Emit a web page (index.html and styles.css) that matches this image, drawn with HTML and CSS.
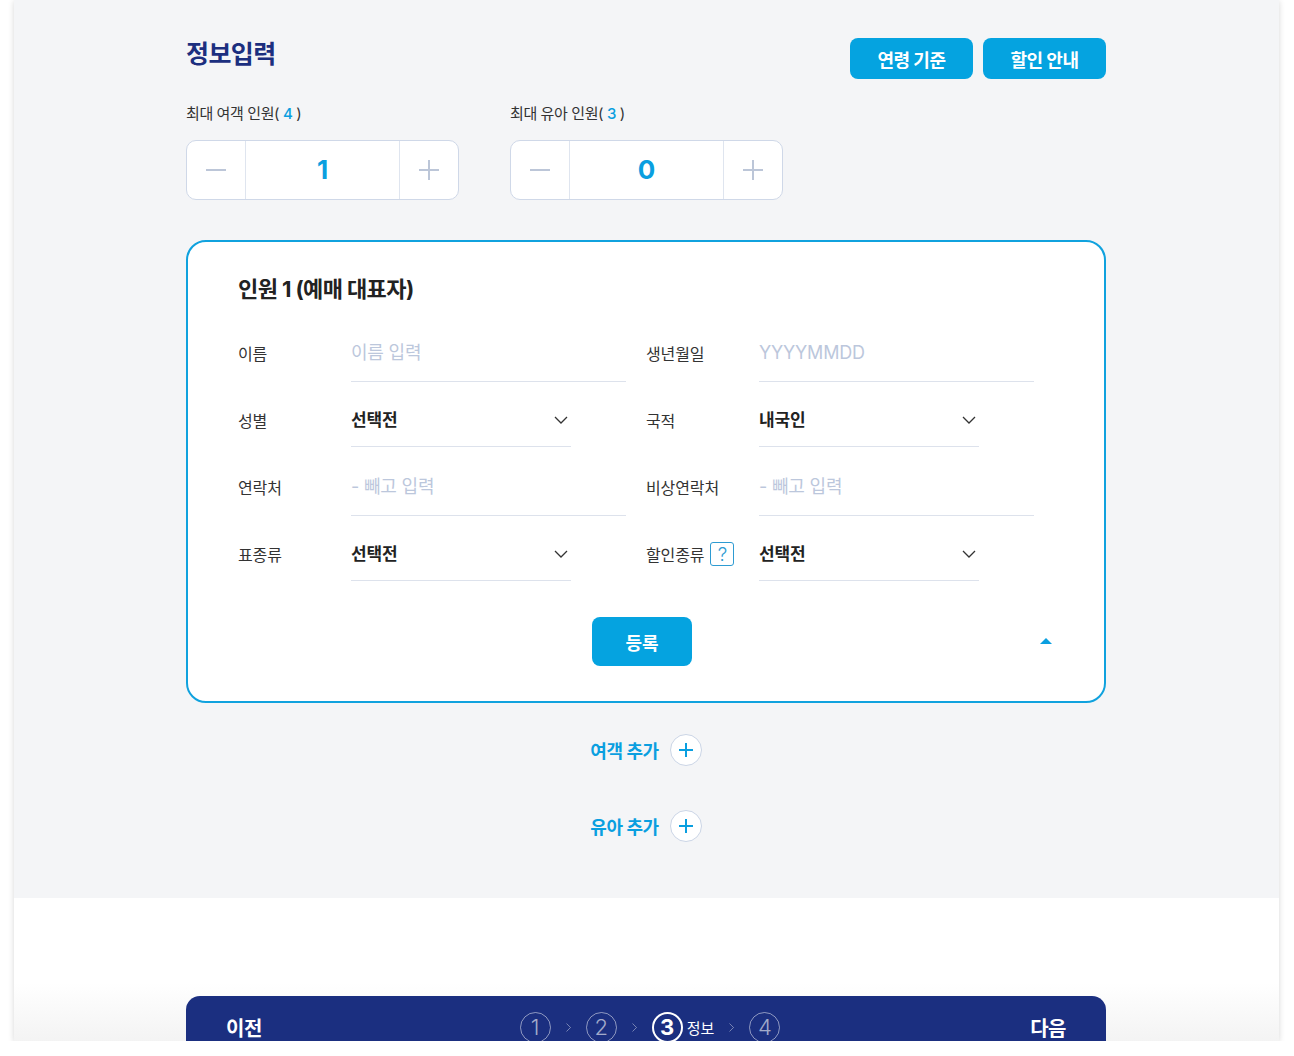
FILE: index.html
```html
<!DOCTYPE html>
<html lang="ko">

<head>
    <meta charset="UTF-8">
    <meta name="viewport" content="width=device-width, initial-scale=1.0">
    <title>정보입력</title>
    <link rel="stylesheet" href="styles.css">
</head>

<body>
    <div class="page">
        <section class="info">
            <div class="info-head">
                <h2 class="info-title">정보입력</h2>
                <div class="head-btns">
                    <button type="button" class="btn-blue">연령 기준</button>
                    <button type="button" class="btn-blue">할인 안내</button>
                </div>
            </div>

            <!-- 인원 선택 -->
            <div class="counters">
                <div class="counter-group">
                    <p class="counter-label">최대 여객 인원( <span class="num">4</span> )</p>
                    <div class="counter">
                        <span class="counter-btn"><i class="minus"></i></span>
                        <span class="counter-value">1</span>
                        <span class="counter-btn"><i class="plus"></i></span>
                    </div>
                </div>
                <div class="counter-group">
                    <p class="counter-label">최대 유아 인원( <span class="num">3</span> )</p>
                    <div class="counter">
                        <span class="counter-btn"><i class="minus"></i></span>
                        <span class="counter-value">0</span>
                        <span class="counter-btn"><i class="plus"></i></span>
                    </div>
                </div>
            </div>

            <!-- 인원 1 -->
            <div class="person-card">
                <h3 class="card-title">인원 1 (예매 대표자)</h3>
                <div class="fields">
                    <div class="field">
                        <label class="field-label" for="name">이름</label>
                        <input class="text-input" type="text" id="name" placeholder="이름 입력">
                    </div>
                    <div class="field">
                        <label class="field-label" for="birth">생년월일</label>
                        <input class="text-input" type="text" id="birth" placeholder="YYYYMMDD">
                    </div>
                    <div class="field">
                        <span class="field-label">성별</span>
                        <div class="select-box">
                            <span>선택전</span>
                            <svg width="14" height="8" viewBox="0 0 14 8"><path d="M1 1l6 6 6-6" fill="none" stroke="#333" stroke-width="1.3"/></svg>
                        </div>
                    </div>
                    <div class="field">
                        <span class="field-label">국적</span>
                        <div class="select-box">
                            <span>내국인</span>
                            <svg width="14" height="8" viewBox="0 0 14 8"><path d="M1 1l6 6 6-6" fill="none" stroke="#333" stroke-width="1.3"/></svg>
                        </div>
                    </div>
                    <div class="field">
                        <label class="field-label" for="phone">연락처</label>
                        <input class="text-input" type="text" id="phone" placeholder="- 빼고 입력">
                    </div>
                    <div class="field">
                        <label class="field-label" for="phone2">비상연락처</label>
                        <input class="text-input" type="text" id="phone2" placeholder="- 빼고 입력">
                    </div>
                    <div class="field">
                        <span class="field-label">표종류</span>
                        <div class="select-box">
                            <span>선택전</span>
                            <svg width="14" height="8" viewBox="0 0 14 8"><path d="M1 1l6 6 6-6" fill="none" stroke="#333" stroke-width="1.3"/></svg>
                        </div>
                    </div>
                    <div class="field">
                        <span class="field-label">할인종류 <span class="help">?</span></span>
                        <div class="select-box">
                            <span>선택전</span>
                            <svg width="14" height="8" viewBox="0 0 14 8"><path d="M1 1l6 6 6-6" fill="none" stroke="#333" stroke-width="1.3"/></svg>
                        </div>
                    </div>
                </div>
                <div class="card-foot">
                    <button type="button" class="btn-submit">등록</button>
                    <span class="fold"></span>
                </div>
            </div>

            <div class="add-list">
                <a class="add-btn">여객 추가 <span class="add-icon"></span></a>
                <a class="add-btn">유아 추가 <span class="add-icon"></span></a>
            </div>
        </section>

        <section class="bottom">
            <nav class="bottom-bar">
                <a class="bar-link">이전</a>
                <div class="steps">
                    <span class="step">1</span>
                    <svg class="step-arrow" width="5" height="9" viewBox="0 0 5 9"><path d="M0.5 0.5l4 4-4 4" fill="none" stroke="currentColor" stroke-width="1"/></svg>
                    <span class="step">2</span>
                    <svg class="step-arrow" width="5" height="9" viewBox="0 0 5 9"><path d="M0.5 0.5l4 4-4 4" fill="none" stroke="currentColor" stroke-width="1"/></svg>
                    <span class="step active">3</span>
                    <span class="step-name">정보</span>
                    <svg class="step-arrow" width="5" height="9" viewBox="0 0 5 9"><path d="M0.5 0.5l4 4-4 4" fill="none" stroke="currentColor" stroke-width="1"/></svg>
                    <span class="step">4</span>
                </div>
                <a class="bar-link">다음</a>
            </nav>
        </section>
    </div>
</body>

</html>
```

FILE: styles.css
```css
body {
    margin: 0;
    background-color: #fff;
    font-family: "Inter", "Noto Sans CJK KR", sans-serif;
    color: #222;
}

.page {
    width: 1265px;
    height: 1041px;
    margin-left: 14px;
    overflow: hidden;
    background-color: #fff;
    box-shadow: 0 1px 6px rgba(0, 0, 0, 0.16);
}

/* 상단 정보 영역 */
.info {
    background-color: #f4f5f7;
    padding: 38px 173px 56px 172px;
}

.info-head {
    display: flex;
    justify-content: space-between;
    align-items: flex-start;
}

.info-title {
    margin: 0;
    font-size: 25px;
    line-height: 32px;
    font-weight: 700;
    letter-spacing: -0.6px;
    color: #1c2f7f;
}

.head-btns {
    display: flex;
    gap: 10px;
}

.btn-blue {
    width: 123px;
    height: 41px;
    border: none;
    border-radius: 8px;
    background-color: #05a3e0;
    color: #fff;
    font-family: inherit;
    font-size: 18px;
    font-weight: 700;
    letter-spacing: -0.5px;
    cursor: pointer;
}

/* 인원 카운터 */
.counters {
    display: flex;
    gap: 51px;
    margin-top: 25px;
}

.counter-label {
    margin: 0 0 16px;
    font-size: 15px;
    line-height: 20px;
    color: #333;
    letter-spacing: -0.4px;
}

.counter-label .num {
    color: #0a9fe0;
    font-weight: 500;
}

.counter {
    display: flex;
    width: 273px;
    height: 60px;
    box-sizing: border-box;
    border: 1px solid #cfd8e8;
    border-radius: 10px;
    background-color: #fff;
}

.counter-btn {
    width: 59px;
    display: flex;
    align-items: center;
    justify-content: center;
}

.counter-value {
    width: 154px;
    display: flex;
    align-items: center;
    justify-content: center;
    padding-bottom: 2px;
    border-left: 1px solid #dfe5ef;
    border-right: 1px solid #dfe5ef;
    font-size: 26px;
    font-weight: 700;
    color: #0a9fe0;
}

.minus,
.plus {
    position: relative;
    width: 20px;
    height: 20px;
}

.minus::before,
.plus::before,
.plus::after {
    content: "";
    position: absolute;
    left: 0;
    top: 9px;
    width: 20px;
    height: 2px;
    background-color: #bcc6d8;
}

.plus::after {
    left: 9px;
    top: 0;
    width: 2px;
    height: 20px;
}

/* 인원 카드 */
.person-card {
    margin-top: 40px;
    padding: 32px 50px 35px;
    border: 2px solid #10a2de;
    border-radius: 20px;
    background-color: #fff;
}

.card-title {
    margin: 0 0 20px;
    font-size: 22px;
    line-height: 30px;
    font-weight: 700;
    letter-spacing: -0.6px;
    color: #222;
}

.fields {
    display: grid;
    grid-template-columns: 388px 388px;
    column-gap: 20px;
    row-gap: 11px;
}

.field {
    display: flex;
    align-items: center;
}

.field-label {
    width: 113px;
    flex-shrink: 0;
    display: flex;
    align-items: center;
    gap: 6px;
    font-size: 16px;
    color: #333;
    letter-spacing: -0.1px;
}

.help {
    width: 24px;
    height: 24px;
    box-sizing: border-box;
    border: 1px solid #2e9bd2;
    border-radius: 3px;
    display: flex;
    align-items: center;
    justify-content: center;
    font-size: 19px;
    font-weight: 300;
    color: #2e9bd2;
    line-height: 1;
}

.text-input {
    width: 275px;
    height: 58px;
    box-sizing: border-box;
    padding: 0;
    border: none;
    border-bottom: 1px solid #dde2ec;
    background: transparent;
    font-family: inherit;
    font-size: 18px;
    letter-spacing: -0.2px;
    color: #222;
    outline: none;
}

.text-input::placeholder {
    color: #bcc7dc;
}

.select-box {
    width: 220px;
    height: 54px;
    box-sizing: border-box;
    padding: 0 3px 3px 0;
    border-bottom: 1px solid #dde2ec;
    display: flex;
    align-items: center;
    justify-content: space-between;
    font-size: 17px;
    font-weight: 700;
    letter-spacing: -0.2px;
    color: #222;
}

.select-box svg {
    margin-top: 3px;
}

.card-foot {
    position: relative;
    display: flex;
    justify-content: center;
    margin-top: 36px;
}

.btn-submit {
    width: 100px;
    height: 49px;
    margin-right: 8px;
    border: none;
    border-radius: 8px;
    background-color: #05a3e0;
    color: #fff;
    font-family: inherit;
    font-size: 18px;
    font-weight: 700;
    cursor: pointer;
}

.fold {
    position: absolute;
    right: 2px;
    top: 21px;
    width: 0;
    height: 0;
    border-left: 6px solid transparent;
    border-right: 6px solid transparent;
    border-bottom: 6px solid #0a9fe0;
}

/* 추가 버튼 */
.add-list {
    display: flex;
    flex-direction: column;
    align-items: center;
    gap: 44px;
    margin-top: 31px;
}

.add-btn {
    display: flex;
    align-items: center;
    gap: 11px;
    font-size: 18px;
    font-weight: 700;
    letter-spacing: -0.4px;
    color: #0a9fe0;
    cursor: pointer;
}

.add-icon {
    position: relative;
    width: 32px;
    height: 32px;
    box-sizing: border-box;
    border: 1px solid #cbd5e6;
    border-radius: 50%;
    background-color: #fff;
}

.add-icon::before,
.add-icon::after {
    content: "";
    position: absolute;
    left: 8px;
    top: 14px;
    width: 14px;
    height: 2px;
    background-color: #0a9fe0;
}

.add-icon::after {
    left: 14px;
    top: 8px;
    width: 2px;
    height: 14px;
}

/* 하단 바 */
.bottom {
    height: 145px;
    box-sizing: border-box;
    padding-top: 98px;
    background: linear-gradient(to bottom, #fff 85px, #f3f3f3 145px);
}

.bottom-bar {
    height: 62px;
    margin: 0 173px 0 172px;
    padding: 0 40px;
    box-sizing: border-box;
    display: flex;
    justify-content: space-between;
    align-items: center;
    border-radius: 14px 14px 0 0;
    background-color: #1b2f80;
    color: #fff;
}

.bar-link {
    font-size: 20px;
    font-weight: 700;
    letter-spacing: -0.5px;
    cursor: pointer;
}

.steps {
    display: flex;
    align-items: center;
    margin-left: 8px;
}

.step {
    width: 31px;
    height: 31px;
    box-sizing: border-box;
    border: 1.5px solid rgba(255, 255, 255, 0.5);
    border-radius: 50%;
    display: flex;
    align-items: center;
    justify-content: center;
    font-size: 22px;
    font-weight: 300;
    color: rgba(255, 255, 255, 0.6);
}

.step.active {
    border: 2px solid #fff;
    font-weight: 700;
    color: #fff;
}

.step-name {
    margin-left: 4px;
    font-size: 15px;
    color: #fff;
}

.step-arrow {
    margin: 0 15px;
    color: rgba(255, 255, 255, 0.4);
}
```
